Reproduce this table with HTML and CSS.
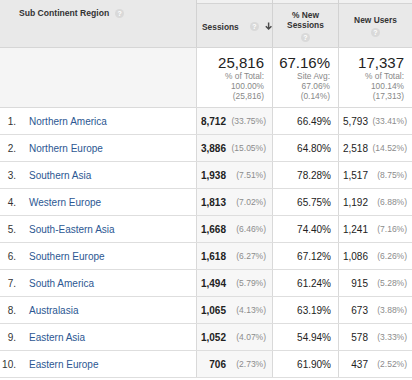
FILE: index.html
```html
<!DOCTYPE html>
<html>
<head>
<meta charset="utf-8">
<link rel="stylesheet" href="styles.css">
</head>
<body>
<div class="report">
  <div class="row head">
    <div class="cell dim-h"><span>Sub Continent Region</span><i class="help">?</i></div>
    <div class="cell mh sess-h"><span>Sessions</span><i class="help">?</i><svg class="sort" width="9" height="10" viewBox="0 0 9 10"><path d="M4.5 0.5V8.5M1 5.2L4.5 8.7L8 5.2" fill="none" stroke="#4a4a4a" stroke-width="1.8"/></svg></div>
    <div class="cell mh center"><span>% New<br>Sessions</span><i class="help">?</i></div>
    <div class="cell mh center"><span>New Users</span><i class="help">?</i></div>
  </div>
  <div class="row sum">
    <div class="cell dim-s"></div>
    <div class="cell tot"><div class="big">25,816</div><div class="sub">% of Total:<br>100.00%<br>(25,816)</div></div>
    <div class="cell tot"><div class="big">67.16%</div><div class="sub">Site Avg:<br>67.06%<br>(0.14%)</div></div>
    <div class="cell tot"><div class="big">17,337</div><div class="sub">% of Total:<br>100.14%<br>(17,313)</div></div>
  </div>
  <div class="row data"><div class="cell dim"><span class="rk">1.</span><a>Northern America</a></div><div class="cell ses"><b>8,712</b><span class="pc">(33.75%)</span></div><div class="cell ns">66.49%</div><div class="cell nu"><span class="n">5,793</span><span class="pc">(33.41%)</span></div></div>
  <div class="row data"><div class="cell dim"><span class="rk">2.</span><a>Northern Europe</a></div><div class="cell ses"><b>3,886</b><span class="pc">(15.05%)</span></div><div class="cell ns">64.80%</div><div class="cell nu"><span class="n">2,518</span><span class="pc">(14.52%)</span></div></div>
  <div class="row data"><div class="cell dim"><span class="rk">3.</span><a>Southern Asia</a></div><div class="cell ses"><b>1,938</b><span class="pc">(7.51%)</span></div><div class="cell ns">78.28%</div><div class="cell nu"><span class="n">1,517</span><span class="pc">(8.75%)</span></div></div>
  <div class="row data"><div class="cell dim"><span class="rk">4.</span><a>Western Europe</a></div><div class="cell ses"><b>1,813</b><span class="pc">(7.02%)</span></div><div class="cell ns">65.75%</div><div class="cell nu"><span class="n">1,192</span><span class="pc">(6.88%)</span></div></div>
  <div class="row data"><div class="cell dim"><span class="rk">5.</span><a>South-Eastern Asia</a></div><div class="cell ses"><b>1,668</b><span class="pc">(6.46%)</span></div><div class="cell ns">74.40%</div><div class="cell nu"><span class="n">1,241</span><span class="pc">(7.16%)</span></div></div>
  <div class="row data"><div class="cell dim"><span class="rk">6.</span><a>Southern Europe</a></div><div class="cell ses"><b>1,618</b><span class="pc">(6.27%)</span></div><div class="cell ns">67.12%</div><div class="cell nu"><span class="n">1,086</span><span class="pc">(6.26%)</span></div></div>
  <div class="row data"><div class="cell dim"><span class="rk">7.</span><a>South America</a></div><div class="cell ses"><b>1,494</b><span class="pc">(5.79%)</span></div><div class="cell ns">61.24%</div><div class="cell nu"><span class="n">915</span><span class="pc">(5.28%)</span></div></div>
  <div class="row data"><div class="cell dim"><span class="rk">8.</span><a>Australasia</a></div><div class="cell ses"><b>1,065</b><span class="pc">(4.13%)</span></div><div class="cell ns">63.19%</div><div class="cell nu"><span class="n">673</span><span class="pc">(3.88%)</span></div></div>
  <div class="row data"><div class="cell dim"><span class="rk">9.</span><a>Eastern Asia</a></div><div class="cell ses"><b>1,052</b><span class="pc">(4.07%)</span></div><div class="cell ns">54.94%</div><div class="cell nu"><span class="n">578</span><span class="pc">(3.33%)</span></div></div>
  <div class="row data"><div class="cell dim"><span class="rk">10.</span><a>Eastern Europe</a></div><div class="cell ses"><b>706</b><span class="pc">(2.73%)</span></div><div class="cell ns">61.90%</div><div class="cell nu"><span class="n">437</span><span class="pc">(2.52%)</span></div></div>
</div>
</body>
</html>
```
FILE: styles.css
```css
html, body { margin: 0; padding: 0; background: #fff; }
body { font-family: "Liberation Sans", Arial, sans-serif; color: #222; }
.report { width: 412px; }
.row { box-sizing: border-box; display: grid; grid-template-columns: 197px 76px 66px 73px; border-bottom: 1px solid #dedede; }
.cell { box-sizing: border-box; border-right: 1px solid #d9d9d9; }
.cell:last-child { border-right: none; }

.head { height: 48px; background: #e9e9e9; border-bottom-color: #d6d6d6; }
.head .cell { border-right-color: #d2d2d2; }
.dim-h { display: flex; align-items: flex-start; padding: 8px 0 0 19px; font-size: 8.6px; font-weight: bold; color: #333; }
.dim-h span { line-height: 10px; }
.dim-h .help { margin: 1px 0 0 6px; }
.mh { box-shadow: inset 0 3px 0 #f1f1f1, inset 0 4px 0 #d4d4d4; padding-top: 4px; font-size: 8.4px; font-weight: bold; color: #333; line-height: 10px; }
.sess-h { display: flex; align-items: center; padding-left: 5px; padding-top: 6px; }
.sess-h .help { margin-left: 11px; }
.sort { margin-left: 6px; margin-top: -2px; }
.center { display: flex; flex-direction: column; align-items: center; justify-content: center; text-align: center; }
.center .help { margin-top: 3px; }
.help { display: inline-flex; align-items: center; justify-content: center; width: 9px; height: 9px; border-radius: 50%; background: #d9d9d9; color: #fff; font-style: normal; font-size: 7px; font-weight: bold; line-height: 9px; flex: none; }

.sum { height: 60px; border-bottom-color: #dadada; }
.dim-s { background: #f5f5f5; }
.tot { text-align: right; padding: 6px 8px 0 0; }
.big { font-size: 15px; line-height: 17px; color: #222; }
.sub { font-size: 8.4px; line-height: 10px; color: #888; }

.data { height: 27px; }
.data .cell { display: flex; align-items: center; font-size: 10px; }
.dim { padding-left: 0; }
.rk { width: 16px; text-align: right; color: #333; }
.dim a { margin-left: 13px; color: #2c5792; }
.ses { background: #f7f7f7; }
.ses b { width: 29px; text-align: right; font-weight: bold; color: #222; }
.pc { flex: 1; text-align: right; font-size: 8.5px; color: #8c8c8c; }
.ses .pc { padding-right: 6px; }
.ns { justify-content: flex-end; padding-right: 7px; color: #222; }
.nu .n { width: 29px; text-align: right; color: #222; }
.nu .pc { padding-right: 5px; }
```
